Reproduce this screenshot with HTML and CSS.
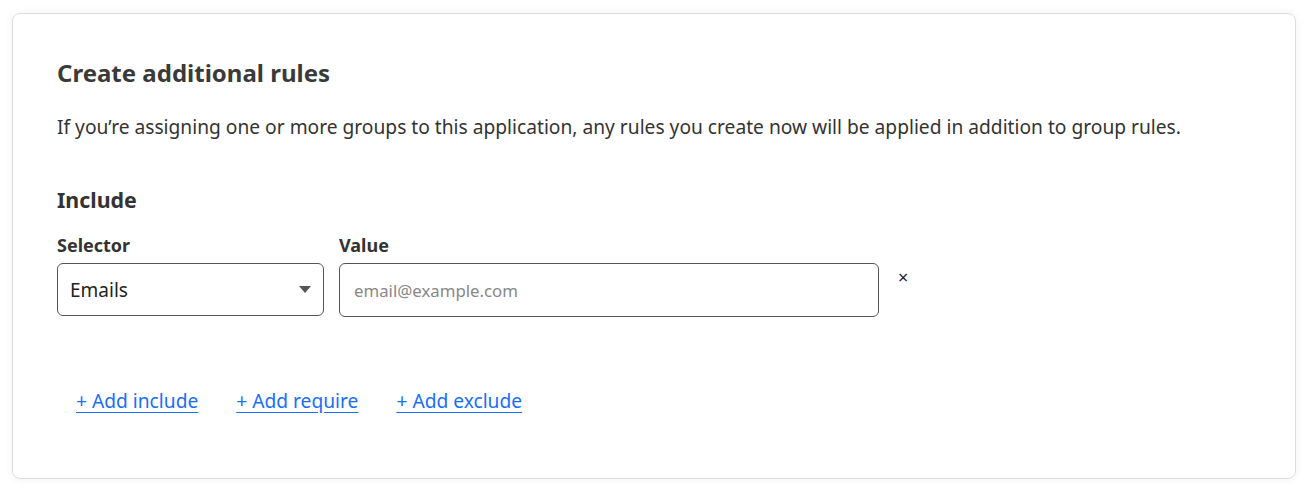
FILE: index.html
```html
<!DOCTYPE html>
<html lang="en">
<head>
<meta charset="utf-8">
<link rel="stylesheet" href="styles.css">
</head>
<body>
<div class="card">
  <h2 class="title">Create additional rules</h2>
  <p class="desc">If you’re assigning one or more groups to this application, any rules you create now will be applied in addition to group rules.</p>
  <h3 class="section">Include</h3>
  <div class="rule">
    <div class="field sel">
      <label class="label">Selector</label>
      <div class="select">
        <span>Emails</span>
        <svg class="caret" width="12" height="7" viewBox="0 0 12 7"><path d="M0 0h12L6 7z" fill="#555"/></svg>
      </div>
    </div>
    <div class="field val">
      <label class="label">Value</label>
      <div class="input"><span class="ph">email@example.com</span></div>
    </div>
    <button class="remove">×</button>
  </div>
  <div class="links">
    <a class="link" href="#">+ Add include</a>
    <a class="link" href="#">+ Add require</a>
    <a class="link" href="#">+ Add exclude</a>
  </div>
</div>
</body>
</html>
```
FILE: styles.css
```css
* { box-sizing: border-box; }
html, body { margin: 0; background: #fff; }
body {
  padding: 13px 11px 8px 12px;
  font-family: "Noto Sans", "Open Sans", sans-serif;
  color: #333;
}
.card {
  border: 1px solid #dcdcdc;
  border-radius: 8px;
  box-shadow: 0 0 10px rgba(0,0,0,0.06);
  padding: 43px 44px 40px 44px;
  height: 466px;
}
.title {
  margin: 0;
  font-size: 24px;
  font-weight: 700;
  line-height: 32px;
  color: #3a3a3a;
}
.desc {
  margin: 24px 0 0;
  font-size: 19.2px;
  line-height: 28px;
  color: #333;
}
.section {
  margin: 44px 0 0;
  font-size: 21.4px;
  font-weight: 700;
  line-height: 30px;
  color: #333;
}
.rule {
  display: flex;
  align-items: flex-start;
  margin-top: 17px;
}
.field { display: flex; flex-direction: column; }
.sel { width: 267px; }
.val { width: 540px; margin-left: 15px; }
.label {
  font-size: 18px;
  font-weight: 700;
  line-height: 26px;
  color: #333;
  margin-bottom: 5px;
}
.select, .input {
  height: 53px;
  border: 1px solid #555;
  border-radius: 6px;
  display: flex;
  align-items: center;
  padding: 0 12px;
  font-size: 19px;
}
.input { height: 54px; padding: 0 14px; }
.select { justify-content: space-between; color: #222; }
.ph { color: #888; font-size: 16.8px; }
.remove {
  border: 0;
  background: none;
  padding: 0;
  margin: 33px 0 0 19px;
  font-family: inherit;
  font-size: 18px;
  line-height: 24px;
  color: #222;
  cursor: pointer;
}
.links {
  display: flex;
  margin-top: 70px;
}
.link {
  padding: 0 19px;
  font-size: 19.2px;
  line-height: 28px;
  color: #1a6ef5;
  text-decoration: underline;
  text-underline-offset: 4px;
}
```
